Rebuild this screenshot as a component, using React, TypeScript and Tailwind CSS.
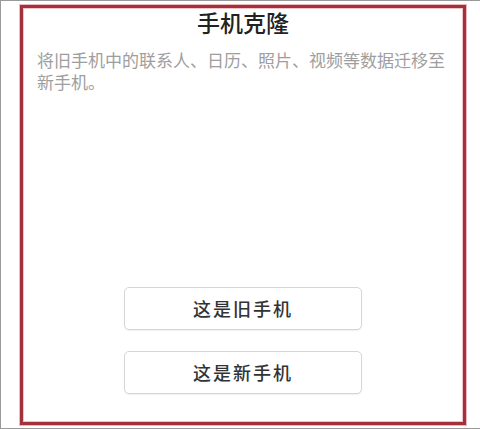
import React from "react";

export default function App() {
  return (
    <div
      className="w-[480px] h-[429px] bg-white border-l border-t border-b border-[#9a9a9a] overflow-hidden"
      style={{ fontFamily: '"Noto Sans CJK SC", "Noto Sans", sans-serif' }}
    >
      <div className="ml-[19px] mt-[4px] w-[446px] h-[420px] border-[3px] border-[#a3303b] shadow-[0_0_0_1px_#e9b9bd,inset_0_0_0_1px_#eec4c7] flex flex-col">
        <h1 className="text-center text-[23px] leading-[26px] font-medium text-[#222] mt-[1px]">
          手机克隆
        </h1>
        <p className="mt-[14px] pl-[14px] pr-[12px] text-[17px] leading-[22px] text-[#9e9e9e]">
          将旧手机中的联系人、日历、照片、视频等数据迁移至新手机。
        </p>
        <div className="mt-auto mb-[28px] flex flex-col items-center gap-[21px]">
          <button className="w-[238px] h-[43px] rounded-[5px] border border-[#d6d6d6] bg-white shadow-[0_1px_1px_rgba(0,0,0,0.06)] text-[18px] tracking-[2px] font-medium text-[#333] flex items-center justify-center">
            这是旧手机
          </button>
          <button className="w-[238px] h-[43px] rounded-[5px] border border-[#d6d6d6] bg-white shadow-[0_1px_1px_rgba(0,0,0,0.06)] text-[18px] tracking-[2px] font-medium text-[#333] flex items-center justify-center">
            这是新手机
          </button>
        </div>
      </div>
    </div>
  );
}
